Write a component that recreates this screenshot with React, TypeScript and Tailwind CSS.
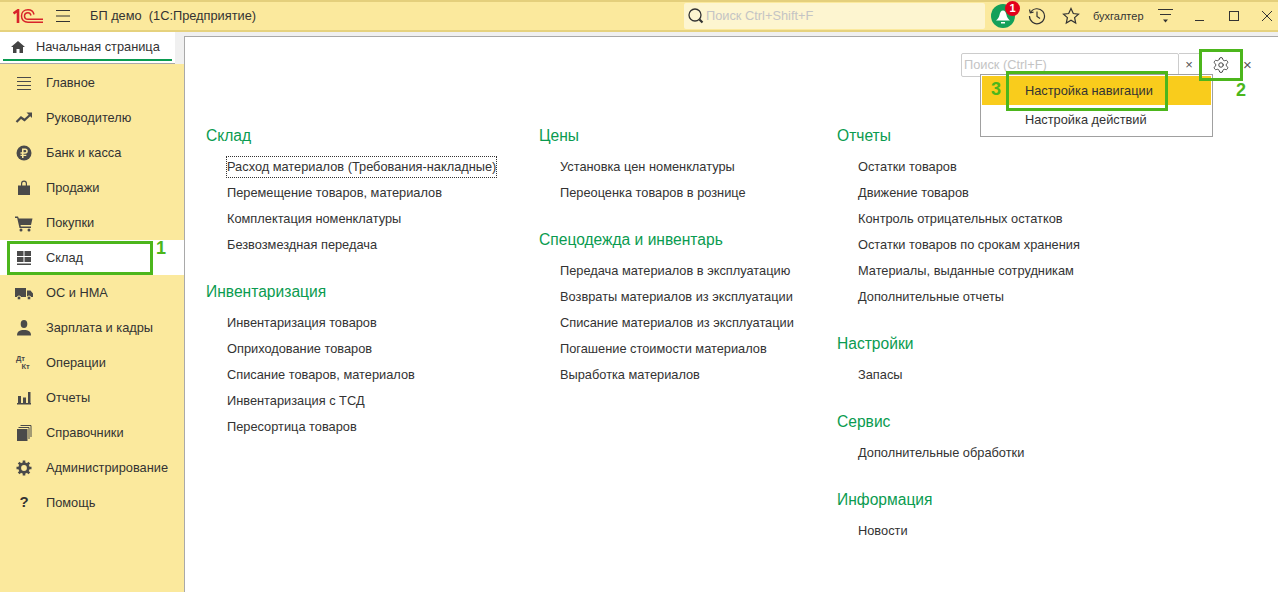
import type { ReactNode } from 'react'
import { Settings } from 'lucide-react'

const font = "font-['Liberation_Sans',Arial,sans-serif]"

function Logo() {
  return (
    <svg width="30" height="14" viewBox="0 0 30 14" fill="none" stroke="#d8232a">
      <path d="M.5 4.5L5 1.300V14" strokeWidth="2.600" />
      <path d="M21 5.500C20.300 2.500 18 .8 15 .8 11 .8 8.500 3.500 8.500 7s2.500 6.200 6.500 6.200H30" strokeWidth="1.500" />
      <path d="M18 6.500C17.500 4.500 16.500 3.700 15 3.700 12.800 3.700 11.500 5 11.500 7s1.300 3.300 3.500 3.300H30" strokeWidth="1.500" />
    </svg>
  )
}

const iconProps = { width: 18, height: 18, viewBox: '0 0 18 18', fill: '#4a4a4a' }

const sideIcons: Record<string, ReactNode> = {
  main: (
    <svg {...iconProps} fill="none" stroke="#4a4a4a">
      <path d="M2 3.500h14M2 7.500h14M2 11.500h14M2 15.500h14" />
    </svg>
  ),
  trend: (
    <svg {...iconProps} fill="none" stroke="#4a4a4a" strokeWidth="2.200">
      <path d="M1.500 13l4.500-4.500 3.500 2.500 5.500-5" />
      <path d="M11.500 3.500h5.500v5.500z" fill="#4a4a4a" strokeWidth="0" />
    </svg>
  ),
  bank: (
    <svg {...iconProps}>
      <circle cx="9" cy="9" r="7.500" />
      <path d="M7 4.500h3.200a2.600 2.600 0 010 5.200H8.500v1h2.800V12H8.500v2H7v-2H5.500v-1.300H7v-1H5.500V8.300H7zm1.500 1.400v2.400h1.600a1.200 1.200 0 000-2.400z" fill="#fbe99d" />
    </svg>
  ),
  sales: (
    <svg {...iconProps}>
      <path fillRule="evenodd" d="M3 6.500h3V4.500a3 3 0 016 0v2h3V16H3zM7.200 6.500h3.600v-2a1.800 1.800 0 00-3.600 0z" />
    </svg>
  ),
  buy: (
    <svg {...iconProps}>
      <path d="M0 2.500h3l.8 2h13.700l-1.500 6.500H5.500l.4 1.500H16V14H4.500L2.200 4H0z" />
      <circle cx="6" cy="16" r="1.500" />
      <circle cx="14" cy="16" r="1.500" />
    </svg>
  ),
  stock: (
    <svg {...iconProps}>
      <path d="M2 2h6.500v5H2zM9.500 2H16v5H9.500zM2 8h6.500v5H2zM9.500 8H16v5H9.500zM2 14.500h14V16H2z" />
    </svg>
  ),
  truck: (
    <svg {...iconProps}>
      <path d="M0 4h11v9H0zM12 6.500h3.500L18 9.500V13h-6z" />
      <circle cx="4" cy="14" r="2" stroke="#fbe99d" />
      <circle cx="14" cy="14" r="2" stroke="#fbe99d" />
    </svg>
  ),
  person: (
    <svg {...iconProps}>
      <ellipse cx="9" cy="5" rx="3.300" ry="4" />
      <path d="M2 16.500c0-4 2.500-5.500 7-5.500s7 1.500 7 5.500z" />
    </svg>
  ),
  ops: (
    <svg {...iconProps}>
      <text x="1" y="7" fontSize="7.500" fontWeight="700" fontFamily="Liberation Sans">Дт</text>
      <text x="6.500" y="15" fontSize="7.500" fontWeight="700" fontFamily="Liberation Sans">Кт</text>
    </svg>
  ),
  report: (
    <svg {...iconProps}>
      <path d="M3 7h3v7H3zM8 8.500h3V14H8zM13 3h2.500v11H13zM2 14h14v1.500H2z" />
    </svg>
  ),
  book: (
    <svg {...iconProps}>
      <path d="M2 5h10.500v12H2z" />
      <path d="M3.500 3.500h10.500V15M5.500 1.500H16V13" fill="none" stroke="#4a4a4a" />
    </svg>
  ),
  admin: (
    <svg {...iconProps} fill="none" stroke="#4a4a4a">
      <circle cx="9" cy="9" r="4.300" strokeWidth="2.800" />
      <path d="M9 1.500v3M9 13.500v3M1.500 9h3M13.500 9h3M3.700 3.700l2 2M12.300 12.300l2 2M14.300 3.700l-2 2M5.700 12.300l-2 2" strokeWidth="2.600" />
    </svg>
  ),
}

const sideItems = [
  { label: 'Главное', icon: 'main' },
  { label: 'Руководителю', icon: 'trend' },
  { label: 'Банк и касса', icon: 'bank' },
  { label: 'Продажи', icon: 'sales' },
  { label: 'Покупки', icon: 'buy' },
  { label: 'Склад', icon: 'stock', active: true },
  { label: 'ОС и НМА', icon: 'truck' },
  { label: 'Зарплата и кадры', icon: 'person' },
  { label: 'Операции', icon: 'ops' },
  { label: 'Отчеты', icon: 'report' },
  { label: 'Справочники', icon: 'book' },
  { label: 'Администрирование', icon: 'admin' },
  { label: 'Помощь', icon: 'help' },
]

const columns = [
  {
    width: 'w-[333px]',
    sections: [
      {
        title: 'Склад',
        items: ['Расход материалов (Требования-накладные)', 'Перемещение товаров, материалов', 'Комплектация номенклатуры', 'Безвозмездная передача'],
      },
      {
        title: 'Инвентаризация',
        items: ['Инвентаризация товаров', 'Оприходование товаров', 'Списание товаров, материалов', 'Инвентаризация с ТСД', 'Пересортица товаров'],
      },
    ],
  },
  {
    width: 'w-[298px]',
    sections: [
      { title: 'Цены', items: ['Установка цен номенклатуры', 'Переоценка товаров в рознице'] },
      {
        title: 'Спецодежда и инвентарь',
        items: ['Передача материалов в эксплуатацию', 'Возвраты материалов из эксплуатации', 'Списание материалов из эксплуатации', 'Погашение стоимости материалов', 'Выработка материалов'],
      },
    ],
  },
  {
    width: 'w-[340px]',
    sections: [
      {
        title: 'Отчеты',
        items: ['Остатки товаров', 'Движение товаров', 'Контроль отрицательных остатков', 'Остатки товаров по срокам хранения', 'Материалы, выданные сотрудникам', 'Дополнительные отчеты'],
      },
      { title: 'Настройки', items: ['Запасы'] },
      { title: 'Сервис', items: ['Дополнительные обработки'] },
      { title: 'Информация', items: ['Новости'] },
    ],
  },
]

function TopBar() {
  return (
    <div className="flex h-[32px] items-center border-t-2 border-b-2 border-t-[#e4cf7c] border-b-[#e6d27e] bg-[#fbe99d]">
      <div className="ml-[13px] w-[30px]">
        <Logo />
      </div>
      <svg width="14" height="12" viewBox="0 0 14 12" className="ml-[13px]" stroke="#333">
        <path d="M0 .5h14M0 6h14M0 11.500h14" />
      </svg>
      <div className="ml-[20px] w-[167px] whitespace-nowrap text-[12.8px] text-[#333]">БП демо&nbsp;&nbsp;(1С:Предприятие)</div>
      <div className="ml-[427px] flex h-[26px] w-[301px] items-center rounded-[2px] bg-[#fdf5d0] pl-[4px]">
        <svg width="16" height="16" viewBox="0 0 16 16" fill="none" stroke="#333" strokeWidth="1.300">
          <circle cx="7" cy="7" r="6" />
          <path d="M11.500 11.500l3 3" strokeWidth="2.200" />
        </svg>
        <span className="ml-[2px] text-[12.8px] text-[#c4c4c4]">Поиск Ctrl+Shift+F</span>
      </div>
      <div className="relative ml-[6px] h-[24px] w-[24px] rounded-full bg-[#14a05a]">
        <svg width="24" height="24" viewBox="0 0 24 24" fill="#fff">
          <path d="M12 6.500c2 0 3 2 3.500 4.500.4 2.500 2 4.500 3.500 5.500H5c1.500-1 3.100-3 3.500-5.500C9 8.500 10 6.500 12 6.500z" />
          <path d="M10 18h4v1.500h-4z" />
        </svg>
        <span className="absolute right-[-5px] top-[-3px] flex h-[15px] w-[15px] items-center justify-center rounded-full bg-[#e3001b] text-[11px] font-bold text-white">1</span>
      </div>
      <svg width="18" height="18" viewBox="0 0 18 18" fill="none" stroke="#333" strokeWidth="1.200" className="ml-[13px]">
        <path d="M2.500 5.500A7.500 7.500 0 111.500 9" />
        <path d="M1.500 2.500l.8 3.300 3.200-.6M9 4.500V9.500l3 2" />
      </svg>
      <svg width="18" height="18" viewBox="0 0 18 18" fill="none" stroke="#333" strokeWidth="1.200" className="ml-[16px]">
        <path d="M9 1.500l2.300 5 5.200.6-3.900 3.500 1.100 5.400L9 13.300 4.300 16l1.100-5.400-3.900-3.500 5.200-.6z" />
      </svg>
      <span className="ml-[13px] w-[52px] whitespace-nowrap text-[11px] text-[#333]">бухгалтер</span>
      <svg width="16" height="14" viewBox="0 0 16 14" className="ml-[13px]" fill="#333">
        <path d="M0 0h15v1H0zM2 5h11v1H2z" />
        <path d="M5 10.500h5L7.500 13.500z" />
      </svg>
      <span className="ml-[21px] mt-[9px] h-px w-[9px] bg-[#333]" />
      <span className="ml-[25px] h-[10px] w-[10px] border border-[#333]" />
      <svg width="10" height="10" viewBox="0 0 10 10" stroke="#333" className="ml-[23px]">
        <path d="M0 0l10 10M10 0L0 10" />
      </svg>
    </div>
  )
}

function Sidebar() {
  return (
    <div className="flex w-[184px] shrink-0 flex-col">
      <div className="flex h-[31px] w-[175px] flex-col bg-white">
        <div className="flex h-[27px] items-center pl-[11px] pt-[3px] text-[12.8px] text-[#333]">
          <svg width="14" height="12" viewBox="0 0 14 12" fill="#444">
            <path d="M7 0l7 6h-2v6H8.500V8h-3v4H2V6H0z" />
          </svg>
          <span className="ml-[11px]">Начальная страница</span>
        </div>
        <div className="ml-[3px] h-[2px] w-[169px] bg-[#0a9b50]" />
      </div>
      <div className="h-[1px] w-[175px] bg-[#a9a9a9]" />
      <div className="flex-1 bg-[#fbe99d] pt-px">
        {sideItems.map((item) => (
          <div key={item.label} className={`flex h-[35px] items-center pl-[17px] text-[12.8px] text-[#333] ${item.active ? 'bg-white' : ''}`}>
            <span className="flex w-[14px] items-center justify-center">
              {item.icon === 'help' ? <span className="text-[15px] font-bold text-[#333]">?</span> : <span className="shrink-0">{sideIcons[item.icon]}</span>}
            </span>
            <span className="ml-[15px]">{item.label}</span>
          </div>
        ))}
      </div>
    </div>
  )
}

function Content() {
  return (
    <div className="relative mt-[4px] flex-1 border-l border-t border-[#a9a9a9] bg-white pl-[21px] pt-[86px]">
      <div className="flex">
        {columns.map((col) => (
          <div key={col.width} className={`${col.width} shrink-0`}>
            {col.sections.map((section, si) => (
              <div key={section.title} className={si > 0 ? 'mt-[21px]' : ''}>
                <div className="mb-[5px] flex h-[26px] items-center text-[15.6px] text-[#0a9b50]">{section.title}</div>
                {section.items.map((it, i) => (
                  <div key={it} className="flex h-[26px] items-center pl-[21px] text-[12.8px] text-[#333]">
                    {it === columns[0].sections[0].items[0] && i === 0 ? (
                      <span className="outline-1 outline-dotted outline-[#333]">{it}</span>
                    ) : (
                      it
                    )}
                  </div>
                ))}
              </div>
            ))}
          </div>
        ))}
      </div>

      {/* search, settings */}
      <div className="absolute left-[776px] top-[16px] flex h-[24px] items-center">
        <div className="flex h-[24px] w-[218px] items-center rounded-[2px] border border-[#ccc] pl-[2px] text-[12.8px] text-[#c4c4c4]">Поиск (Ctrl+F)</div>
        <div className="flex h-[24px] w-[20px] items-center justify-center border-y border-[#ccc] text-[13px] text-[#555]">×</div>
        <Settings size={18} strokeWidth={1.300} color="#444" className="ml-[13px]" />
        <span className="ml-[13px] text-[15px] text-[#555]">×</span>
      </div>

      {/* dropdown */}
      <div className="absolute left-[795px] top-[37px] h-[63px] w-[233px] border border-[#a0a0a0] bg-white p-px text-[12.8px] text-[#333]">
        <div className="flex h-[29px] items-center bg-[#f9cc1c] pl-[43px]">Настройка навигации</div>
        <div className="flex h-[29px] items-center pl-[43px]">Настройка действий</div>
      </div>

      {/* green callouts */}
      <div className="absolute left-[821px] top-[34px] h-[40px] w-[162px] border-[3px] border-[#4cb61c]" />
      <div className="absolute left-[1014px] top-[12px] h-[32px] w-[44px] border-[3px] border-[#4cb61c]" />
      <span className="absolute left-[806px] top-[43px] text-[18px] font-bold leading-none text-[#4cb61c]">3</span>
      <span className="absolute left-[1051px] top-[44px] text-[18px] font-bold leading-none text-[#4cb61c]">2</span>
    </div>
  )
}

export default function App() {
  return (
    <div className={`relative h-[592px] w-[1278px] overflow-hidden bg-[#f0f0f0] ${font}`}>
      <TopBar />
      <div className="flex h-[560px]">
        <Sidebar />
        <Content />
      </div>
      <div className="absolute left-[7px] top-[241px] h-[34px] w-[146px] border-[3px] border-[#4cb61c]" />
      <span className="absolute left-[156px] top-[239px] text-[18px] font-bold leading-none text-[#4cb61c]">1</span>
    </div>
  )
}
